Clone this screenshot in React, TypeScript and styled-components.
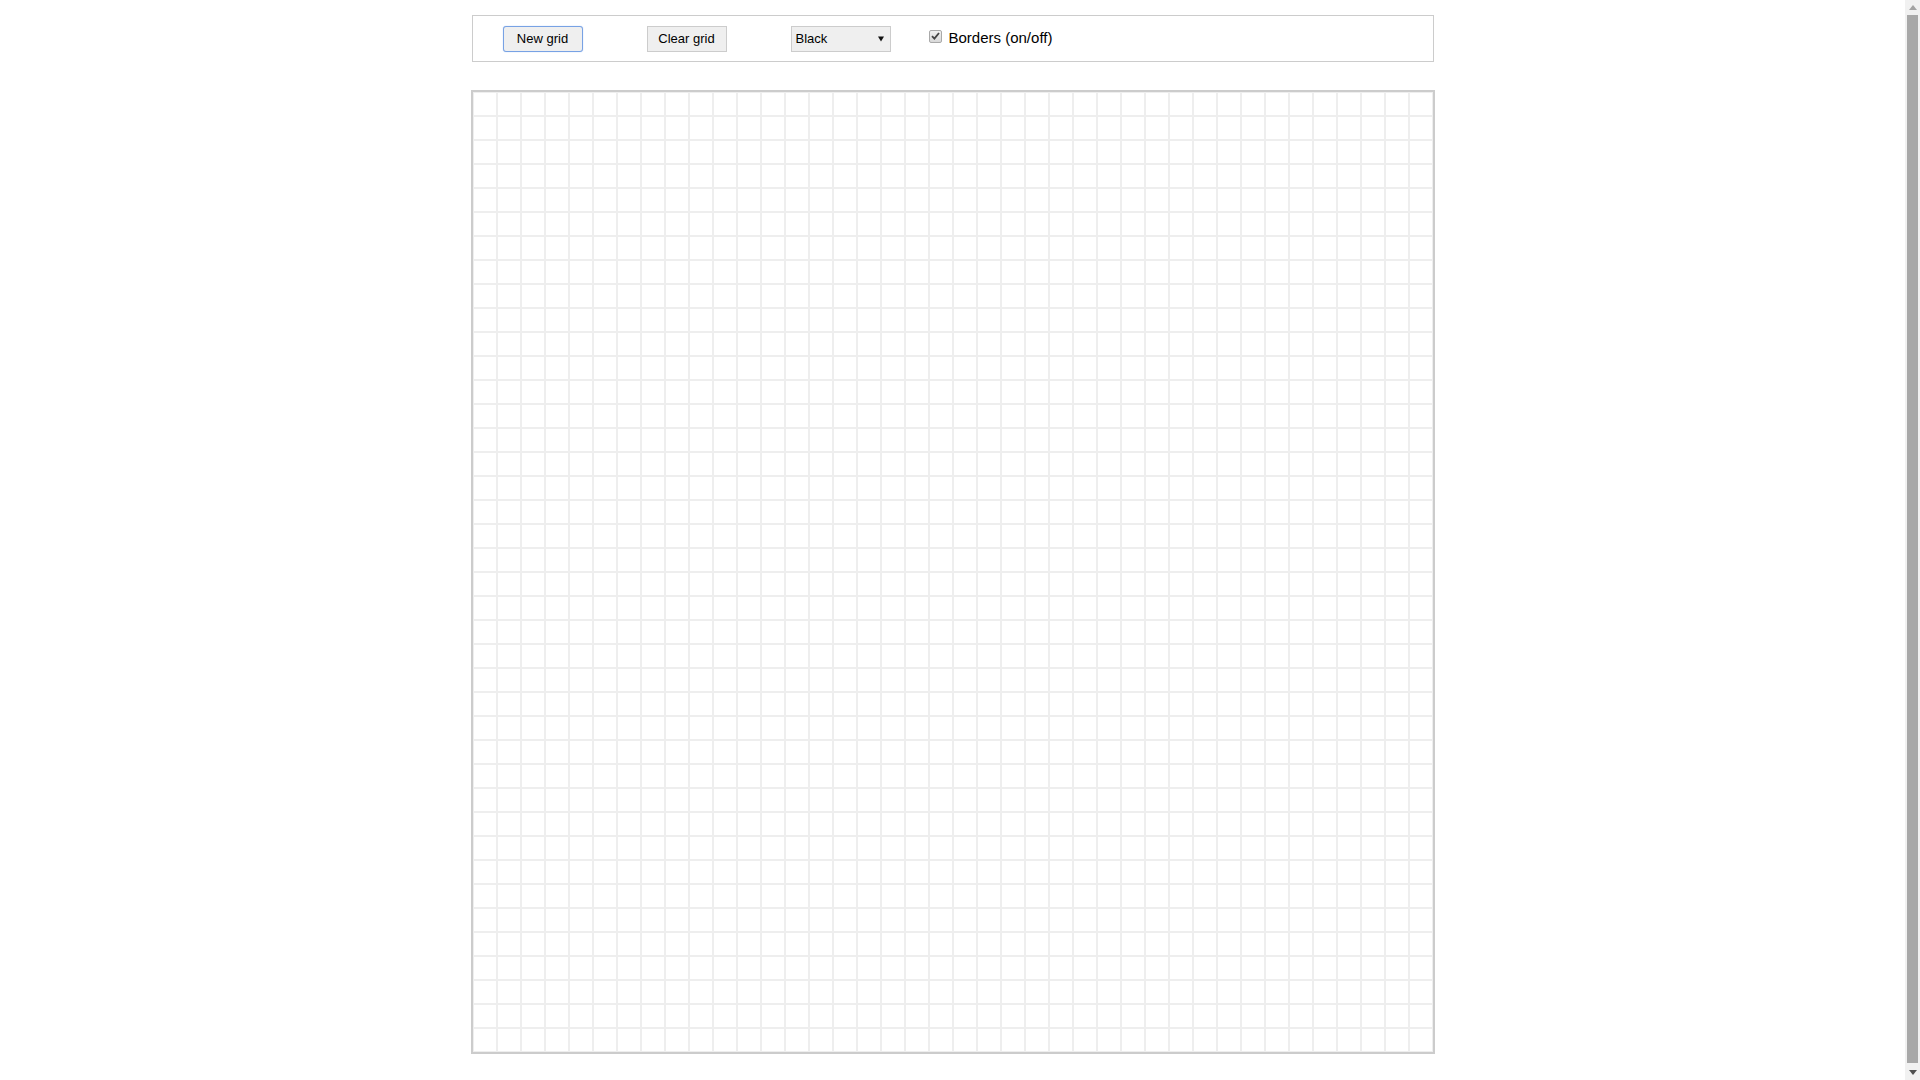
import React, { useState } from "react";
import styled, { createGlobalStyle } from "styled-components";

const GRID = 40;

const Global = createGlobalStyle`
  html, body { margin: 0; padding: 0; background: #fff; }
  body { font-family: "Liberation Sans", Arial, sans-serif; color: #000; }
`;

const Viewport = styled.div`
  padding-right: 15px;
`;

const Page = styled.div`
  width: 964px;
  margin: 0 auto;
  padding: 15px 0 32px;
  display: flex;
  flex-direction: column;
  align-items: center;
  gap: 28px;
`;

const Toolbar = styled.div`
  box-sizing: border-box;
  width: 962px;
  height: 47px;
  border: 1px solid #cccccc;
  display: flex;
  align-items: center;
  padding-left: 30px;
`;

const Button = styled.button<{ $focused?: boolean }>`
  box-sizing: border-box;
  width: 80px;
  height: 26px;
  margin-right: 64px;
  padding: 0;
  font-family: "Liberation Sans", Arial, sans-serif;
  font-size: 13px;
  color: #000;
  background: #efefef;
  border: 1px solid ${(p) => (p.$focused ? "#78a2e4" : "#cccccc")};
  border-radius: ${(p) => (p.$focused ? "3px" : "0")};
  box-shadow: ${(p) => (p.$focused ? "0 0 1px 0 #8fb4ee" : "none")};
  outline: none;
  cursor: pointer;
`;

const SelectWrap = styled.div`
  position: relative;
  width: 100px;
  height: 26px;
  margin-right: 38px;
`;

const Select = styled.select`
  box-sizing: border-box;
  width: 100%;
  height: 100%;
  appearance: none;
  -webkit-appearance: none;
  border: 1px solid #cccccc;
  border-radius: 0;
  background: #efefef;
  padding: 0 0 0 4px;
  font-family: "Liberation Sans", Arial, sans-serif;
  font-size: 13px;
  color: #000;
  outline: none;
`;

const Arrow = styled.svg`
  position: absolute;
  right: 7px;
  top: 10px;
  pointer-events: none;
`;

const CheckLabel = styled.label`
  display: flex;
  align-items: center;
  gap: 7px;
  font-size: 15px;
  color: #000;
  cursor: pointer;
  margin-top: -2px;
`;

const HiddenInput = styled.input`
  display: none;
`;

const Box = styled.span`
  box-sizing: border-box;
  width: 13px;
  height: 13px;
  border: 1px solid #a9a9a9;
  border-radius: 2px;
  background: linear-gradient(#f0f0f0, #d9d9d9);
  display: flex;
  align-items: center;
  justify-content: center;
  margin-top: -3px;
`;

const Grid = styled.div`
  display: grid;
  grid-template-columns: repeat(${GRID}, 24px);
  grid-auto-rows: 24px;
  border: 2px solid #cccccc;
`;

const Cell = styled.div<{ $borders: boolean }>`
  box-sizing: border-box;
  width: 24px;
  height: 24px;
  border: 1px solid ${(p) => (p.$borders ? "#eeeeee" : "transparent")};
  background: #fff;
`;

const Scrollbar = styled.div`
  position: fixed;
  top: 0;
  right: 0;
  width: 15px;
  height: 100vh;
  background: #f1f1f1;
  display: flex;
  flex-direction: column;
`;

const ScrollArrow = styled.div`
  height: 15px;
  flex: none;
  display: flex;
  align-items: center;
  justify-content: center;
`;

const ScrollTrack = styled.div`
  flex: 1;
  padding: 0 2px 2px;
  display: flex;
`;

const Thumb = styled.div`
  flex: 1;
  background: #a8a8a8;
`;

export default function App() {
  const [borders, setBorders] = useState(true);
  const [color, setColor] = useState("black");
  const cells = Array.from({ length: GRID * GRID }, (_, i) => i);
  return (
    <>
      <Global />
      <Viewport>
        <Page>
          <Toolbar>
            <Button $focused>New grid</Button>
            <Button>Clear grid</Button>
            <SelectWrap>
              <Select value={color} onChange={(e) => setColor(e.target.value)}>
                <option value="black">Black</option>
                <option value="red">Red</option>
                <option value="green">Green</option>
                <option value="blue">Blue</option>
              </Select>
              <Arrow width="6" height="6" viewBox="0 0 6 6">
                <path d="M0 0.5 H6 L3 5.5 Z" fill="#111" />
              </Arrow>
            </SelectWrap>
            <CheckLabel>
              <HiddenInput
                type="checkbox"
                checked={borders}
                onChange={() => setBorders(!borders)}
              />
              <Box>
                {borders && (
                  <svg width="9" height="8" viewBox="0 0 9 8">
                    <path
                      d="M1 4.2 L3.4 6.6 L8 1"
                      stroke="#444"
                      strokeWidth="1.8"
                      fill="none"
                    />
                  </svg>
                )}
              </Box>
              Borders (on/off)
            </CheckLabel>
          </Toolbar>
          <Grid>
            {cells.map((i) => (
              <Cell key={i} $borders={borders} />
            ))}
          </Grid>
        </Page>
      </Viewport>
      <Scrollbar>
        <ScrollArrow>
          <svg width="8" height="5" viewBox="0 0 8 5">
            <path d="M0 5 H8 L4 0 Z" fill="#a3a3a3" />
          </svg>
        </ScrollArrow>
        <ScrollTrack>
          <Thumb />
        </ScrollTrack>
        <ScrollArrow>
          <svg width="8" height="5" viewBox="0 0 8 5">
            <path d="M0 0 H8 L4 5 Z" fill="#505050" />
          </svg>
        </ScrollArrow>
      </Scrollbar>
    </>
  );
}
